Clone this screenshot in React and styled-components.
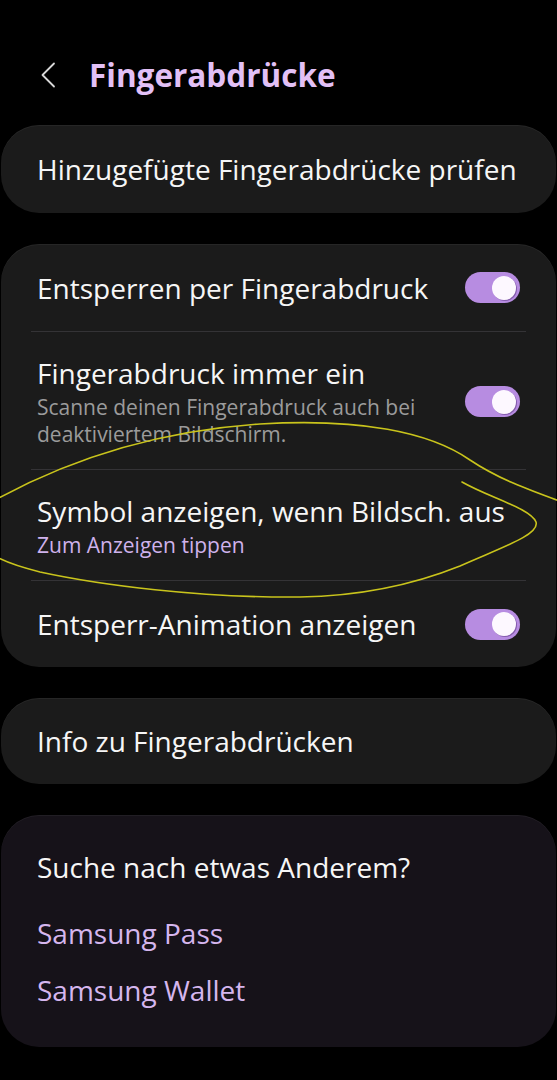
import React from "react";
import styled, { createGlobalStyle } from "styled-components";

const Global = createGlobalStyle`
  html, body { margin: 0; padding: 0; background: #000; }
  body { font-family: "Open Sans", "Noto Sans", sans-serif; -webkit-font-smoothing: antialiased; }
`;

const Page = styled.div`
  position: relative;
  width: 557px;
  min-height: 1080px;
  box-sizing: border-box;
  padding: 0 1px;
  background: #000;
  display: flex;
  flex-direction: column;
`;

const Header = styled.header`
  height: 125px;
  box-sizing: border-box;
  padding: 50px 0 0 39px;
  display: flex;
  align-items: flex-start;
`;

const BackButton = styled.button`
  width: 18px;
  height: 50px;
  padding: 0;
  border: 0;
  background: none;
  display: flex;
  align-items: center;
  svg { display: block; }
`;

const Title = styled.h1`
  margin: 0 0 0 31px;
  font-size: 31.5px;
  line-height: 50px;
  font-weight: 700;
  color: #e2c0f6;
`;

const Stack = styled.div`
  display: flex;
  flex-direction: column;
  gap: 31px;
`;

const Card = styled.section`
  background: ${(p) => (p.$tint ? "#161219" : "#1b1b1b")};
  border-radius: 38px;
  box-shadow: inset 0 1px 0 rgba(255, 255, 255, 0.05);
  overflow: hidden;
`;

const Row = styled.div`
  min-height: ${(p) => p.$h || 87}px;
  box-sizing: border-box;
  padding: ${(p) => (p.$multi ? "23px 36px 21px 36px" : "0 36px")};
  display: flex;
  align-items: center;
  gap: 16px;
`;

const Divider = styled.div`
  height: 1px;
  margin: 0 30px;
  background: #343336;
`;

const Texts = styled.div`
  flex: 1;
  min-width: 0;
  display: flex;
  flex-direction: column;
`;

const Label = styled.div`
  font-size: 28px;
  line-height: 36px;
  color: #f6f6f6;
  white-space: nowrap;
`;

const Sub = styled.div`
  margin-top: 3px;
  font-size: 21px;
  line-height: 27px;
  color: ${(p) => (p.$accent ? "#cfb2ec" : "#9b9b9b")};
`;

const Track = styled.div`
  flex: none;
  width: 55px;
  height: 31px;
  border-radius: 16px;
  background: #b78ce1;
  display: flex;
  align-items: center;
  justify-content: ${(p) => (p.$on ? "flex-end" : "flex-start")};
  padding: 0 4px;
  box-sizing: border-box;
`;

const Knob = styled.div`
  width: 24px;
  height: 24px;
  border-radius: 50%;
  background: #fdf8ff;
  box-shadow: 1px 1px 0 rgba(120, 80, 160, 0.8);
`;

const Section = styled.div`
  padding: 34px 36px 39px;
  display: flex;
  flex-direction: column;
`;

const SectionHeading = styled.div`
  font-size: 28px;
  line-height: 36px;
  color: #f6f6f6;
  margin-bottom: 30px;
`;

const Links = styled.div`
  display: flex;
  flex-direction: column;
  gap: 21px;
`;

const LinkText = styled.a`
  font-size: 28px;
  line-height: 36px;
  color: #d5b6ee;
  text-decoration: none;
`;

const Annotation = styled.svg`
  position: absolute;
  left: 0;
  top: 0;
  width: 557px;
  height: 1080px;
  pointer-events: none;
  overflow: hidden;
`;

const Toggle = ({ on = true }) => (
  <Track $on={on}>
    <Knob />
  </Track>
);

export default function App() {
  return (
    <>
      <Global />
      <Page>
        <Header>
          <BackButton aria-label="Zurück">
            <svg width="16" height="26" viewBox="0 0 16 26">
              <polyline
                points="14,1.5 2.5,13 14,24.5"
                fill="none"
                stroke="#d8d8d8"
                strokeWidth="1.8"
                strokeLinecap="round"
                strokeLinejoin="round"
              />
            </svg>
          </BackButton>
          <Title>Fingerabdrücke</Title>
        </Header>
        <Stack>
          <Card>
            <Row $h={88}>
              <Texts>
                <Label>Hinzugefügte Fingerabdrücke prüfen</Label>
              </Texts>
            </Row>
          </Card>
          <Card>
            <Row>
              <Texts>
                <Label>Entsperren per Fingerabdruck</Label>
              </Texts>
              <Toggle />
            </Row>
            <Divider />
            <Row $multi>
              <Texts>
                <Label>Fingerabdruck immer ein</Label>
                <Sub>
                  Scanne deinen Fingerabdruck auch bei
                  <br />
                  deaktiviertem Bildschirm.
                </Sub>
              </Texts>
              <Toggle />
            </Row>
            <Divider />
            <Row $multi>
              <Texts>
                <Label>Symbol anzeigen, wenn Bildsch. aus</Label>
                <Sub $accent>Zum Anzeigen tippen</Sub>
              </Texts>
            </Row>
            <Divider />
            <Row $h={86}>
              <Texts>
                <Label>Entsperr-Animation anzeigen</Label>
              </Texts>
              <Toggle />
            </Row>
          </Card>
          <Card>
            <Row $h={86}>
              <Texts>
                <Label>Info zu Fingerabdrücken</Label>
              </Texts>
            </Row>
          </Card>
          <Card $tint>
            <Section>
              <SectionHeading>Suche nach etwas Anderem?</SectionHeading>
              <Links>
                <LinkText href="#">Samsung Pass</LinkText>
                <LinkText href="#">Samsung Wallet</LinkText>
              </Links>
            </Section>
          </Card>
        </Stack>
        <Annotation viewBox="0 0 557 1080">
          <path
            d="M -5 500 C 50 470, 140 432, 260 424 C 360 418, 430 432, 470 460 C 500 480, 530 490, 562 502"
            fill="none"
            stroke="#c9c41c"
            strokeWidth="1.6"
            strokeLinecap="round"
          />
          <path
            d="M 462 482 C 490 498, 530 508, 536 522 C 540 535, 500 548, 460 566 C 420 582, 370 596, 300 597 C 200 598, 100 585, 40 572 C 20 567, 5 562, -5 556"
            fill="none"
            stroke="#c9c41c"
            strokeWidth="1.6"
            strokeLinecap="round"
          />
        </Annotation>
      </Page>
    </>
  );
}
